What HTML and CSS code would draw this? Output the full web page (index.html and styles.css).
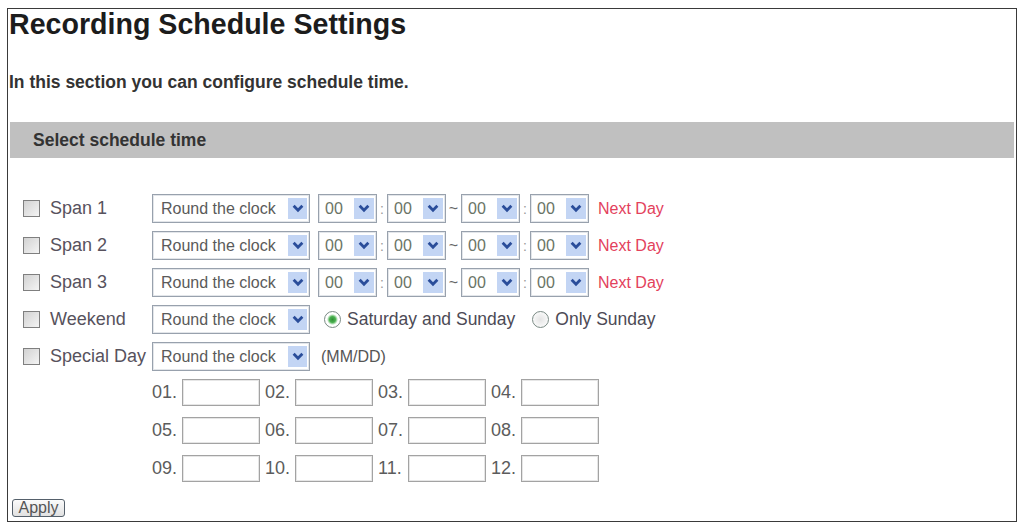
FILE: index.html
```html
<!DOCTYPE html>
<html lang="en">
<head>
  <meta charset="UTF-8">
  <title>Recording Schedule Settings</title>
  <link rel="stylesheet" href="styles.css">
</head>
<body>
  <div class="frame">
    <h1>Recording Schedule Settings</h1>
    <p class="intro">In this section you can configure schedule time.</p>
    <div class="bar">Select schedule time</div>

    <div class="schedule">
      <!-- span rows -->
      <div class="row">
        <label class="name"><input type="checkbox"> Span 1</label>
        <span class="sel mode"><select><option>Round the clock</option></select><span class="arrow"><svg viewBox="0 0 11 8"><polyline points="1.5,1.5 5.5,5.5 9.5,1.5"/></svg></span></span>
        <span class="sel time"><select><option>00</option></select><span class="arrow"><svg viewBox="0 0 11 8"><polyline points="1.5,1.5 5.5,5.5 9.5,1.5"/></svg></span></span>
        <span class="sep colon">:</span>
        <span class="sel time"><select><option>00</option></select><span class="arrow"><svg viewBox="0 0 11 8"><polyline points="1.5,1.5 5.5,5.5 9.5,1.5"/></svg></span></span>
        <span class="sep tilde">~</span>
        <span class="sel time"><select><option>00</option></select><span class="arrow"><svg viewBox="0 0 11 8"><polyline points="1.5,1.5 5.5,5.5 9.5,1.5"/></svg></span></span>
        <span class="sep colon">:</span>
        <span class="sel time"><select><option>00</option></select><span class="arrow"><svg viewBox="0 0 11 8"><polyline points="1.5,1.5 5.5,5.5 9.5,1.5"/></svg></span></span>
        <span class="next">Next Day</span>
      </div>
      <div class="row">
        <label class="name"><input type="checkbox"> Span 2</label>
        <span class="sel mode"><select><option>Round the clock</option></select><span class="arrow"><svg viewBox="0 0 11 8"><polyline points="1.5,1.5 5.5,5.5 9.5,1.5"/></svg></span></span>
        <span class="sel time"><select><option>00</option></select><span class="arrow"><svg viewBox="0 0 11 8"><polyline points="1.5,1.5 5.5,5.5 9.5,1.5"/></svg></span></span>
        <span class="sep colon">:</span>
        <span class="sel time"><select><option>00</option></select><span class="arrow"><svg viewBox="0 0 11 8"><polyline points="1.5,1.5 5.5,5.5 9.5,1.5"/></svg></span></span>
        <span class="sep tilde">~</span>
        <span class="sel time"><select><option>00</option></select><span class="arrow"><svg viewBox="0 0 11 8"><polyline points="1.5,1.5 5.5,5.5 9.5,1.5"/></svg></span></span>
        <span class="sep colon">:</span>
        <span class="sel time"><select><option>00</option></select><span class="arrow"><svg viewBox="0 0 11 8"><polyline points="1.5,1.5 5.5,5.5 9.5,1.5"/></svg></span></span>
        <span class="next">Next Day</span>
      </div>
      <div class="row">
        <label class="name"><input type="checkbox"> Span 3</label>
        <span class="sel mode"><select><option>Round the clock</option></select><span class="arrow"><svg viewBox="0 0 11 8"><polyline points="1.5,1.5 5.5,5.5 9.5,1.5"/></svg></span></span>
        <span class="sel time"><select><option>00</option></select><span class="arrow"><svg viewBox="0 0 11 8"><polyline points="1.5,1.5 5.5,5.5 9.5,1.5"/></svg></span></span>
        <span class="sep colon">:</span>
        <span class="sel time"><select><option>00</option></select><span class="arrow"><svg viewBox="0 0 11 8"><polyline points="1.5,1.5 5.5,5.5 9.5,1.5"/></svg></span></span>
        <span class="sep tilde">~</span>
        <span class="sel time"><select><option>00</option></select><span class="arrow"><svg viewBox="0 0 11 8"><polyline points="1.5,1.5 5.5,5.5 9.5,1.5"/></svg></span></span>
        <span class="sep colon">:</span>
        <span class="sel time"><select><option>00</option></select><span class="arrow"><svg viewBox="0 0 11 8"><polyline points="1.5,1.5 5.5,5.5 9.5,1.5"/></svg></span></span>
        <span class="next">Next Day</span>
      </div>

      <div class="row">
        <label class="name"><input type="checkbox"> Weekend</label>
        <span class="sel mode"><select><option>Round the clock</option></select><span class="arrow"><svg viewBox="0 0 11 8"><polyline points="1.5,1.5 5.5,5.5 9.5,1.5"/></svg></span></span>
        <label class="choice first"><input type="radio" name="weekend" checked> Saturday and Sunday</label>
        <label class="choice"><input type="radio" name="weekend"> Only Sunday</label>
      </div>

      <div class="row">
        <label class="name"><input type="checkbox"> Special Day</label>
        <span class="sel mode"><select><option>Round the clock</option></select><span class="arrow"><svg viewBox="0 0 11 8"><polyline points="1.5,1.5 5.5,5.5 9.5,1.5"/></svg></span></span>
        <span class="hint">(MM/DD)</span>
      </div>

      <div class="dates">
        <span>01.</span><input type="text"><span>02.</span><input type="text"><span>03.</span><input type="text"><span>04.</span><input type="text">
        <span>05.</span><input type="text"><span>06.</span><input type="text"><span>07.</span><input type="text"><span>08.</span><input type="text">
        <span>09.</span><input type="text"><span>10.</span><input type="text"><span>11.</span><input type="text"><span>12.</span><input type="text">
      </div>
    </div>

    <button class="apply">Apply</button>
  </div>
</body>
</html>
```

FILE: styles.css
```css
body {
  margin: 8px 4px 0 7px;
  font-family: "Liberation Sans", Arial, sans-serif;
  color: #333;
  background: #fff;
}

/* outer window frame */
.frame {
  box-sizing: border-box;
  height: 514px;
  padding: 0 2px;
  border: 1px solid #3a3a3a;
  box-shadow: 1px 1px 0 #8a8a8a;
}

h1 {
  margin: 0 0 0 -1px;
  font-size: 28.6px;
  line-height: 31px;
  color: #1c1c1c;
}

.intro {
  margin: 32px 0 0 -1px;
  font-size: 17.5px;
  font-weight: bold;
  line-height: 20px;
  color: #333;
}

.bar {
  margin-top: 30px;
  height: 36px;
  line-height: 36px;
  padding-left: 23px;
  background: #c0c0c0;
  font-size: 17.5px;
  font-weight: bold;
  color: #333;
}

.schedule {
  margin-top: 36px;
  padding-left: 13px;
}

.row {
  display: flex;
  align-items: center;
  height: 29px;
  margin-bottom: 8px;
}

.name {
  display: flex;
  align-items: center;
  gap: 10px;
  width: 129px;
  font-size: 18px;
  color: #57525d;
}

input[type="checkbox"] {
  appearance: none;
  margin: 0;
  width: 17px;
  height: 17px;
  border: 1px solid #7f7f7f;
  background: linear-gradient(135deg, #d2d2d2, #f4f4f4);
}

/* fake dropdowns */
.sel {
  position: relative;
  display: inline-block;
  height: 29px;
}

.sel select {
  appearance: none;
  box-sizing: border-box;
  width: 100%;
  height: 29px;
  margin: 0;
  border: 1px solid #98a1ad;
  box-shadow: inset 0 0 0 1px #e3e6ea;
  border-radius: 0;
  background: #fff;
  font-family: inherit;
  font-size: 16px;
  color: #5a5a5a;
  padding: 0 0 0 8px;
}

.sel .arrow {
  position: absolute;
  top: 4px;
  right: 3px;
  bottom: 4px;
  width: 19px;
  background: #c3d5f4;
  display: flex;
  align-items: center;
  justify-content: center;
  pointer-events: none;
}

.sel .arrow svg {
  width: 12px;
  height: 9px;
  fill: none;
  stroke: #2a4d9a;
  stroke-width: 2.6;
}

.mode {
  width: 158px;
}

.time {
  width: 59px;
}

.mode + .time {
  margin-left: 8px;
}

.time select {
  padding-left: 6px;
  color: #6a7466;
}

.time .arrow {
  width: 20px;
}

.sep {
  text-align: center;
  color: #999;
}

.colon {
  width: 10px;
  font-size: 14px;
}

.tilde {
  width: 15px;
  font-size: 16px;
  color: #666;
}

.next {
  margin-left: 9px;
  font-size: 16px;
  color: #e3415c;
}

.choice {
  display: flex;
  align-items: center;
  gap: 6px;
  font-size: 17.5px;
  color: #4c4a55;
}

.choice.first {
  margin-left: 14px;
  margin-right: 17px;
}

input[type="radio"] {
  appearance: none;
  margin: 0;
  width: 17px;
  height: 17px;
  border-radius: 50%;
  border: 1px solid #7a8a84;
  background: radial-gradient(circle, #e4e4e4 0, #fafafa 8px);
}

input[type="radio"]:checked {
  background: radial-gradient(circle, #2f8f34 0, #49b04f 3px, #b9e2bb 4.5px, #fff 5.5px);
}

.hint {
  margin-left: 11px;
  font-size: 16px;
  color: #555;
}

/* special day date boxes */
.dates {
  display: grid;
  grid-template-columns: repeat(4, 30px 83px);
  grid-auto-rows: 27px;
  row-gap: 11px;
  align-items: center;
  margin-top: 1px;
  padding-left: 129px;
  font-size: 18px;
  color: #5c5c5c;
}

.dates input {
  box-sizing: border-box;
  width: 78px;
  height: 27px;
  margin: 0;
  border: 1px solid #a3a3a3;
  box-shadow: inset 0 0 0 1px #e6e6e6;
}

.apply {
  display: block;
  margin: 17px 0 0 2px;
  width: 53px;
  height: 18px;
  padding: 0;
  border: 1px solid #55606b;
  border-radius: 3px;
  background: linear-gradient(#fbfbfb, #e1e1e1);
  font-family: inherit;
  font-size: 16px;
  line-height: 14px;
  color: #555;
}
```
